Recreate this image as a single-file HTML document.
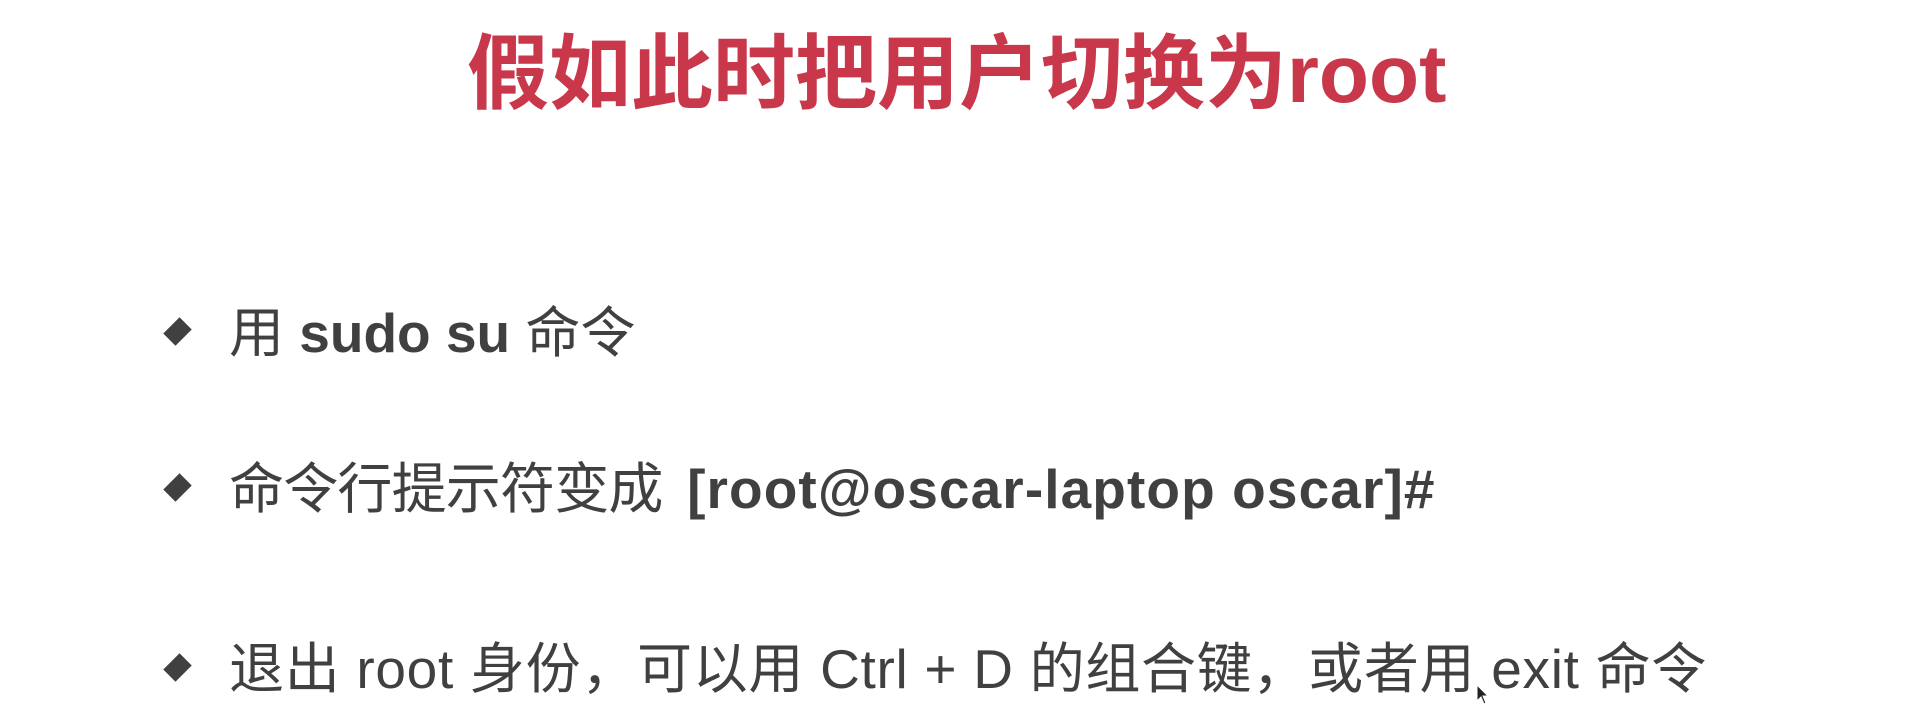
<!DOCTYPE html>
<html><head><meta charset="utf-8"><style>
body{margin:0;width:1920px;height:710px;background:#fff;position:relative;overflow:hidden;font-family:"Liberation Sans","Noto Sans CJK SC",sans-serif;}
.t{position:absolute;left:467px;top:21px;font-size:82px;line-height:92px;font-weight:bold;color:#c8374a;white-space:nowrap;font-family:"Noto Sans CJK SC","Liberation Sans",sans-serif;}
.t span{font-family:"Liberation Sans",sans-serif;}
.l{position:absolute;left:229px;font-size:55px;line-height:62px;color:#404040;white-space:nowrap;}
.d{position:absolute;left:166px;width:23px;height:23px;background:#404040;transform:rotate(45deg) scaleX(.75);}
b{font-weight:bold;}
</style></head><body>
<div class="t">假如此时把用户切换为<span>root</span></div>
<div class="d" style="top:320px"></div>
<div class="l" style="top:302px">用 <b>sudo su</b> 命令</div>
<div class="d" style="top:476px"></div>
<div class="l" style="top:458px;letter-spacing:-0.8px">命令行提示符变成 <b style="margin-left:10px;letter-spacing:1.1px">[root@oscar-laptop oscar]#</b></div>
<div class="d" style="top:656px"></div>
<div class="l" style="top:638px;letter-spacing:0.7px">退出 root 身份，可以用 Ctrl + D 的组合键，或者用 exit 命令</div>
<svg style="position:absolute;left:1476px;top:684px" width="14" height="22" viewBox="0 0 14 22"><path d="M1 1 L1 17 L5 13 L8 20 L10 19 L7 12 L12 12 Z" fill="#222" stroke="#fff" stroke-width="1"/></svg>
</body></html>
